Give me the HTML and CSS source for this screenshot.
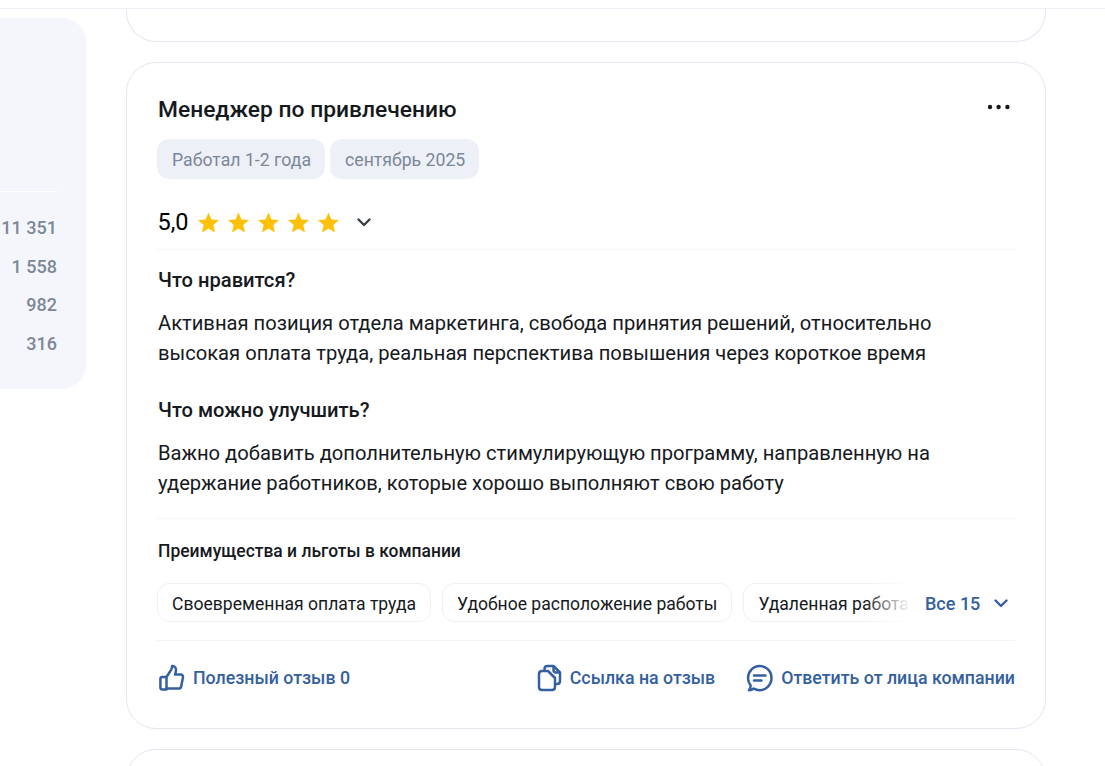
FILE: index.html
```html
<!DOCTYPE html>
<html lang="ru">
<head>
<meta charset="utf-8">
<title>Отзыв</title>
<link rel="stylesheet" href="styles.css">
</head>
<body>
<header class="topbar"></header>
<div class="layout">
  <aside class="side">
    <div class="side-line"></div>
    <ul class="side-list">
      <li>11 351</li>
      <li>1 558</li>
      <li>982</li>
      <li>316</li>
    </ul>
  </aside>
  <main class="feed">
    <div class="card card-prev"></div>
    <article class="card card-main">
      <div class="head">
        <h2 class="title">Менеджер по привлечению</h2>
        <svg class="more" width="24" height="6" viewBox="0 0 24 6"><circle cx="3" cy="3" r="2.2"/><circle cx="11.6" cy="3" r="2.2"/><circle cx="20.4" cy="3" r="2.2"/></svg>
      </div>
      <div class="tags">
        <span class="tag">Работал 1-2 года</span>
        <span class="tag">сентябрь 2025</span>
      </div>
      <div class="rating">
        <span class="score">5,0</span>
        <span class="stars">
          <svg class="star" viewBox="0 0 24 24"><path d="M12 1.500l3.100 7.300 7.900.7-6 5.200 1.800 7.800L12 18.300l-6.800 4.200 1.800-7.800-6-5.200 7.900-.7z"/></svg>
          <svg class="star" viewBox="0 0 24 24"><path d="M12 1.500l3.100 7.300 7.900.7-6 5.200 1.800 7.800L12 18.300l-6.800 4.200 1.800-7.800-6-5.200 7.900-.7z"/></svg>
          <svg class="star" viewBox="0 0 24 24"><path d="M12 1.500l3.100 7.300 7.900.7-6 5.200 1.800 7.800L12 18.300l-6.800 4.200 1.800-7.800-6-5.200 7.900-.7z"/></svg>
          <svg class="star" viewBox="0 0 24 24"><path d="M12 1.500l3.100 7.300 7.900.7-6 5.200 1.800 7.800L12 18.300l-6.800 4.200 1.800-7.800-6-5.200 7.900-.7z"/></svg>
          <svg class="star" viewBox="0 0 24 24"><path d="M12 1.500l3.100 7.300 7.900.7-6 5.200 1.800 7.800L12 18.300l-6.800 4.200 1.800-7.800-6-5.200 7.900-.7z"/></svg>
        </span>
        <svg class="chev chev-dark" width="14" height="9" viewBox="0 0 14 9"><path d="M1.500 1.500L7 7l5.500-5.500"/></svg>
      </div>
      <section class="body-block">
        <h3 class="sub">Что нравится?</h3>
        <p class="text">Активная позиция отдела маркетинга, свобода принятия решений, относительно высокая оплата труда, реальная перспектива повышения через короткое время</p>
        <h3 class="sub sub-second">Что можно улучшить?</h3>
        <p class="text">Важно добавить дополнительную стимулирующую программу, направленную на удержание работников, которые хорошо выполняют свою работу</p>
      </section>
      <section class="perks">
        <h4 class="perks-title">Преимущества и льготы в компании</h4>
        <div class="perks-row">
          <div class="perks-scroll">
            <span class="perk">Своевременная оплата труда</span>
            <span class="perk">Удобное расположение работы</span>
            <span class="perk">Удаленная работа</span>
            <span class="fade"></span>
          </div>
          <div class="perks-all">
            <span>Все 15</span>
            <svg class="chev chev-blue" width="14" height="9" viewBox="0 0 14 9"><path d="M1.500 1.500L7 7l5.500-5.500"/></svg>
          </div>
        </div>
      </section>
      <footer class="actions">
        <a class="action">
          <svg class="ic" width="27" height="28" viewBox="0 0 27 28"><path d="M8.500 13v12.500H4.300c-1.100 0-1.900-.8-1.900-1.900v-8.700c0-1.100.8-1.900 1.900-1.900h4.200zm0 0l4.600-7.200c.6-1 1-2.300 1-3.800 0 0 3.900-.2 3.900 3.800 0 2.400-1 4.800-1 4.800h5.800c1.500 0 2.500 1.300 2.200 2.700l-1.900 9.400c-.2 1-1 1.700-2 1.700H8.500"/></svg>
          <span>Полезный отзыв 0</span>
        </a>
        <div class="action-group">
          <a class="action">
            <svg class="ic" width="25" height="28" viewBox="0 0 25 28"><path d="M7.500 6.500V5c0-1.700 1.300-3 3-3h6L23 8.500V17c0 1.700-1.300 3-3 3h-1.500"/><path d="M16.500 2.500V6c0 1.500 1 2.500 2.500 2.500h3.500"/><path d="M2 10c0-1.700 1.300-3 3-3h6l7 7v9c0 1.700-1.300 3-3 3H5c-1.700 0-3-1.300-3-3z"/></svg>
            <span>Ссылка на отзыв</span>
          </a>
          <a class="action">
            <svg class="ic" width="27" height="28" viewBox="-0.5 0 27 28"><path d="M2.500 26.200c1.700 0 3.300-.5 4.700-1.600 1.800 1 3.800 1.600 6 1.600 6.500 0 11.800-5.500 11.800-12.200S19.700 2 13.200 2 1.500 7.400 1.500 14c0 2.800.9 5.400 2.600 7.400.1 1.800-.5 3.500-1.600 4.800z"/><path d="M7.500 11.500h11.500M7.500 16.500h7.500"/></svg>
            <span>Ответить от лица компании</span>
          </a>
        </div>
      </footer>
    </article>
    <div class="card card-next"></div>
  </main>
</div>
</body>
</html>
```
FILE: styles.css
```css
* { box-sizing: border-box; }
html, body { margin: 0; padding: 0; height: 766px; overflow: hidden; background: #fff; }
body { font-family: Roboto, "Noto Sans", sans-serif; color: #16191d; }

.topbar { height: 9px; background: #fff; border-bottom: 1px solid #eceff5; }

.layout { display: flex; align-items: flex-start; height: 757px; overflow: hidden; }

.side { width: 86px; height: 371px; margin-top: 9px; background: #f4f6fb; border-radius: 0 24px 24px 0; padding-top: 173px; padding-right: 29px; flex: none; }
.side-line { height: 1px; background: #fff; }
.side-list { list-style: none; margin: 17px 0 0; padding: 0; text-align: right; font-size: 18px; font-weight: 500; line-height: 38.6px; color: #7c8797; white-space: nowrap; }

.feed { width: 920px; margin-left: 40px; flex: none; display: flex; flex-direction: column; gap: 20px; }

.card { border: 1px solid #e2e6ef; border-radius: 30px; background: #fff; flex: none; }
.card-prev { height: 33px; border-top: 0; border-radius: 0 0 30px 30px; }
.card-main { height: 667px; padding: 30px 30px 0 30px; }
.card-next { height: 60px; }

.head { display: flex; justify-content: space-between; align-items: flex-start; padding-top: 3px; }
.title { margin: 0 0 0 1px; font-size: 22.800px; line-height: 28px; font-weight: 500; color: #16191d; }
.more { fill: #16191d; margin-top: 8px; margin-right: 4px; }

.tags { display: flex; gap: 5px; margin-top: 15px; }
.tag { height: 40px; padding: 0 14px 0 15px; border-radius: 12px; background: #edf0f7; color: #7c8797; font-size: 17.680px; line-height: 42px; }

.rating { display: flex; align-items: center; height: 71px; padding-top: 16px; border-bottom: 1px solid #f2f4f8; padding-left: .5px; }
.score { font-size: 23.500px; font-weight: 400; color: #000; width: 39px; }
.stars { display: flex; gap: 7px; }
.star { width: 23px; height: 23px; fill: #ffc107; display: block; }
.chev { fill: none; stroke-width: 2.400; stroke-linecap: round; stroke-linejoin: round; flex: none; }
.chev-dark { stroke: #3a3f46; margin-left: 17px; }
.chev-blue { stroke: #34609f; margin-top: 1px; }

.body-block { padding: 0 0 20px 1px; border-bottom: 1px solid #f2f4f8; }
.sub { margin: 17px 0 0; font-size: 20.150px; line-height: 26px; font-weight: 500; color: #16191d; }
.sub-second { margin-top: 29px; }
.text { margin: 15px 0 0; max-width: 800px; font-size: 20.170px; line-height: 30px; color: #16191d; }

.perks { border-bottom: 1px solid #f2f4f8; padding-bottom: 18px; }
.perks-title { margin: 21px 0 0 1px; font-size: 17.470px; line-height: 22px; font-weight: 500; color: #16191d; }
.perks-row { display: flex; align-items: center; margin-top: 21px; }
.perks-scroll { position: relative; width: 753px; display: flex; gap: 11px; overflow: hidden; flex: none; }
.perk { flex: none; height: 39px; padding: 0 14px; border: 1px solid #eef0f6; border-radius: 12px; font-size: 17.560px; line-height: 40px; color: #16191d; background: #fff; }
.fade { position: absolute; right: 0; top: 0; width: 45px; height: 39px; background: linear-gradient(90deg, rgba(255,255,255,0), #fff); }
.perks-all { display: flex; align-items: center; gap: 14px; margin: 1px 0 0 15px; color: #34609f; font-size: 18px; font-weight: 500; }

.actions { display: flex; justify-content: space-between; align-items: center; height: 74px; padding-left: 1px; }
.action-group { display: flex; gap: 31px; }
.action { display: flex; align-items: center; gap: 8px; color: #34609f; font-size: 17.780px; font-weight: 500; }
.ic { fill: none; stroke: #34609f; stroke-width: 2.500; stroke-linecap: round; stroke-linejoin: round; flex: none; }
```
